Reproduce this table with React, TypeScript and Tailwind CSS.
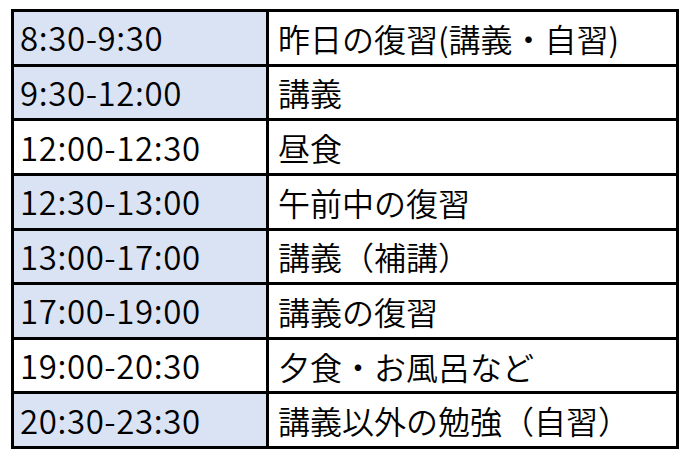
import React from "react";

const rows: { time: string; task: string; blue: boolean }[] = [
  { time: "8:30-9:30", task: "昨日の復習(講義・自習)", blue: true },
  { time: "9:30-12:00", task: "講義", blue: true },
  { time: "12:00-12:30", task: "昼食", blue: false },
  { time: "12:30-13:00", task: "午前中の復習", blue: true },
  { time: "13:00-17:00", task: "講義（補講）", blue: true },
  { time: "17:00-19:00", task: "講義の復習", blue: true },
  { time: "19:00-20:30", task: "夕食・お風呂など", blue: false },
  { time: "20:30-23:30", task: "講義以外の勉強（自習）", blue: true },
];

export default function App() {
  return (
    <div
      className="w-[685px] h-[459px] bg-white pt-[9px] pl-[11px]"
      style={{ fontFamily: '"Noto Sans CJK JP", "Noto Sans", sans-serif' }}
    >
      <div className="grid w-[668px] h-[440px] grid-cols-[252px_407px] grid-rows-8 gap-[3px] border-[3px] border-black bg-black">
        {rows.map((r) => (
          <React.Fragment key={r.time}>
            <div
              className={`flex items-center pl-[6px] text-[33px] font-[350] tracking-[0.6px] leading-none text-black ${
                r.blue ? "bg-[#dae3f3]" : "bg-white"
              }`}
            >
              {r.time}
            </div>
            <div className="flex items-center bg-white pl-[9px] text-[32px] font-[350] leading-none text-black whitespace-nowrap">
              {r.task}
            </div>
          </React.Fragment>
        ))}
      </div>
    </div>
  );
}
